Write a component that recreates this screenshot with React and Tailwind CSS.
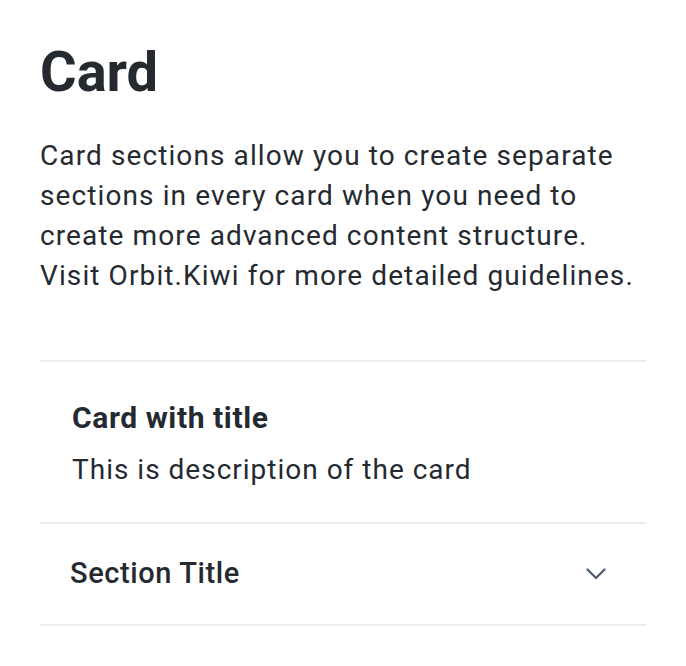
import React from "react";

function ChevronDown() {
  return (
    <svg width="20" height="12" viewBox="0 0 20 12" fill="none" className="text-[#4f5e71]">
      <path d="M1.5 1.5l8.5 8.5 8.5-8.5" stroke="currentColor" strokeWidth="2.3" strokeLinecap="round" strokeLinejoin="round" />
    </svg>
  );
}

export default function App() {
  return (
    <div className="min-h-screen bg-white px-10 pt-[38px] text-[#252a31]" style={{ fontFamily: "Roboto, sans-serif" }}>
      <h1 className="text-[56px] leading-[68px] font-bold">Card</h1>
      <p className="mt-[30px] text-[28px] leading-[40px] tracking-[1.1px]">
        Card sections allow you to create separate sections in every card when you need to create more advanced content structure. Visit Orbit.Kiwi for more detailed guidelines.
      </p>

      <div className="mt-[64px] border-t-2 border-b-2 border-[#e8edf1]">
        {/* Header */}
        <div className="px-8 pt-[36px] pb-[32px]">
          <h2 className="text-[30px] leading-[40px] font-bold tracking-[0.6px]">Card with title</h2>
          <p className="mt-[12px] text-[28px] leading-[40px] tracking-[1px]">This is description of the card</p>
        </div>

        {/* Section */}
        <div className="flex items-center justify-between border-t-2 border-[#e8edf1] pl-[30px] pr-[40px] h-[102px]">
          <span className="text-[29px] font-medium tracking-[0.6px]">Section Title</span>
          <ChevronDown />
        </div>
      </div>
    </div>
  );
}
